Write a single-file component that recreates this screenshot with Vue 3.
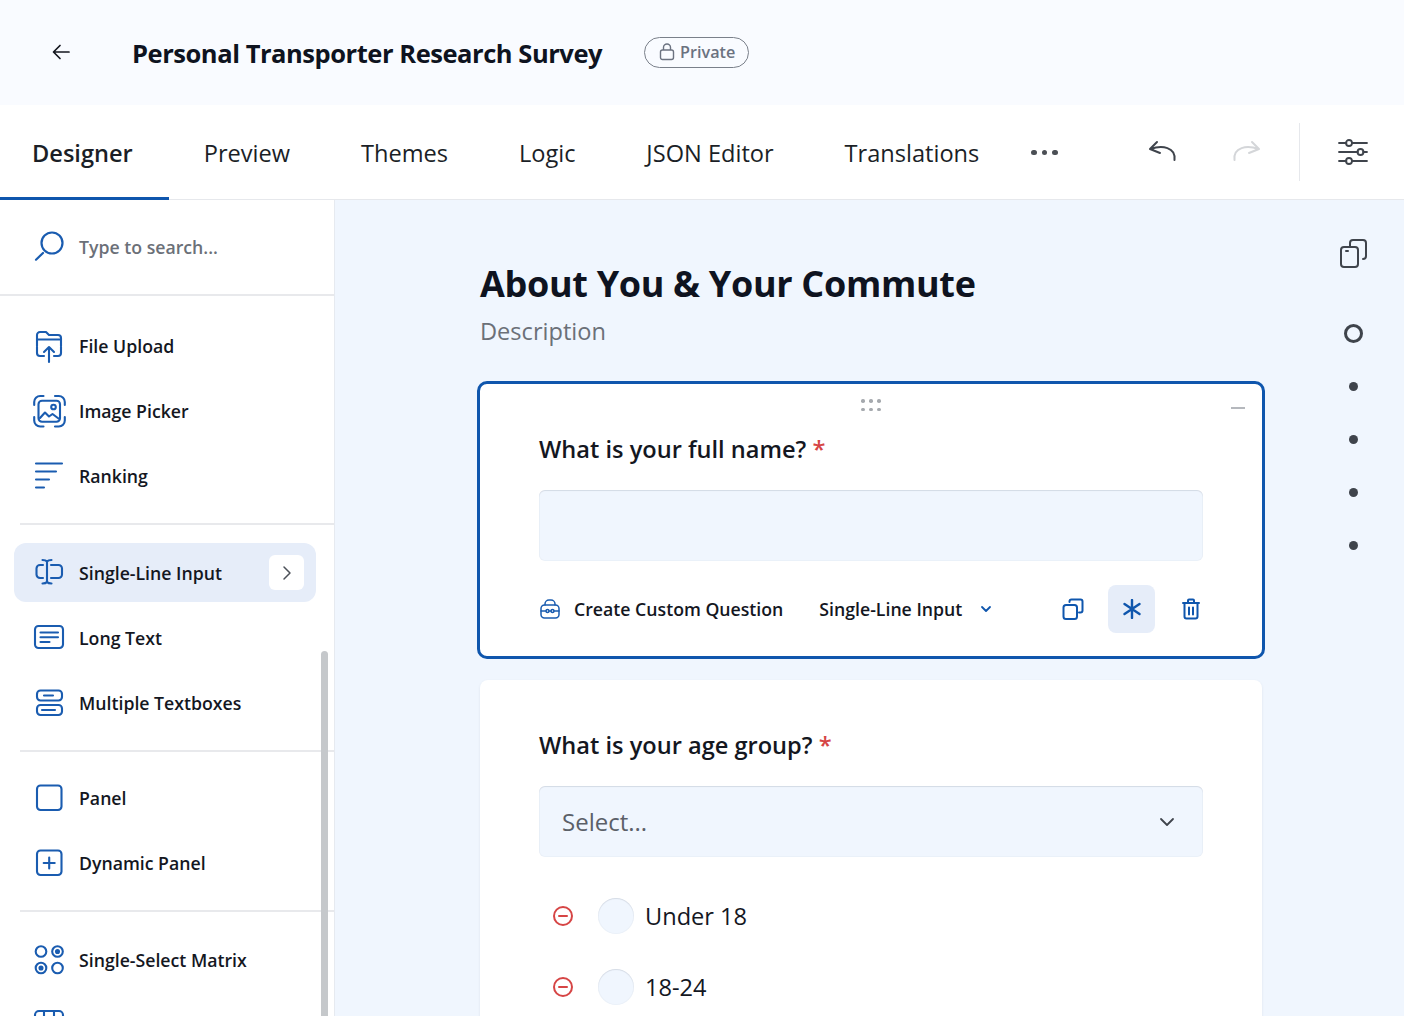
<script setup>
const tabs = ['Designer', 'Preview', 'Themes', 'Logic', 'JSON Editor', 'Translations']

const icons = {
  upload: '<path d="M4 16V5a3 3 0 0 1 3-3h6l3 3h9a3 3 0 0 1 3 3v8"/><path d="M4 9.500h24"/><path d="M4 17v6a3 3 0 0 0 3 3h4M28 17v6a3 3 0 0 1-3 3h-4"/><path d="M16 32V17M11 22l5-5 5 5"/>',
  image: '<rect x="5.500" y="5.700" width="21.500" height="21" rx="3.500"/><circle cx="20.500" cy="12" r="2.300"/><path d="M7 23l5-5.500 4 4 3.500-2.500 6 4.500"/><path d="M1.200 10V7a6 6 0 0 1 6-6h3.300M22 1h3.800a6 6 0 0 1 6 6v3M31.800 22v3.500a6 6 0 0 1-6 6H22M10.500 31.500H7.200a6 6 0 0 1-6-6V22"/>',
  ranking: '<path d="M3 3.500h26M3 11.500h20M3 19.500h13M3 27.500h8"/>',
  single: '<path d="M10 8H7a3.500 3.500 0 0 0-3.500 3.500v6A3.500 3.500 0 0 0 7 21h3M18 8h7.500a3.500 3.500 0 0 1 3.500 3.500v6a3.500 3.500 0 0 1-3.500 3.500H18"/><path d="M14 4v21M9.500 3c2 0 3.500.3 4.500 1.500C15 3.300 16.500 3 18.500 3M9.500 26.500c2 0 3.500-.3 4.500-1.500 1 1.200 2.500 1.500 4.500 1.500"/>',
  long: '<rect x="2" y="4" width="28" height="22" rx="3.500"/><path d="M7.500 10.500h17.500M7.500 15.300h17.500M7.500 20h9"/>',
  multi: '<rect x="4" y="3.500" width="25" height="10" rx="3.500"/><rect x="4" y="18" width="25" height="10" rx="3.500"/><path d="M11 8.500h9M9 23h13"/>',
  panel: '<rect x="4" y="3.500" width="24.500" height="24.500" rx="3.500"/>',
  dynamic: '<rect x="4" y="3.500" width="24.500" height="24.500" rx="3.500"/><path d="M16.200 10.500v11M10.700 16h11"/>',
  matrix: '<circle cx="8" cy="7.500" r="5.300"/><circle cx="24.500" cy="7.500" r="5.300"/><circle cx="8" cy="24" r="5.300"/><circle cx="24.500" cy="24" r="5.300"/><circle cx="24.500" cy="7.500" r="1.500" fill="#1a5cb0"/><circle cx="8" cy="24" r="1.500" fill="#1a5cb0"/>',
  table: '<rect x="2" y="2" width="28" height="24" rx="4"/><path d="M2 10h28M11 2v24M21 2v24"/>'
}

const groups = [
  [
    { name: 'File Upload', icon: 'upload' },
    { name: 'Image Picker', icon: 'image' },
    { name: 'Ranking', icon: 'ranking' }
  ],
  [
    { name: 'Single-Line Input', icon: 'single', active: true },
    { name: 'Long Text', icon: 'long' },
    { name: 'Multiple Textboxes', icon: 'multi' }
  ],
  [
    { name: 'Panel', icon: 'panel' },
    { name: 'Dynamic Panel', icon: 'dynamic' }
  ],
  [
    { name: 'Single-Select Matrix', icon: 'matrix' },
    { name: '', icon: 'table' }
  ]
]

const choices = ['Under 18', '18-24']
const dots = [1, 2, 3, 4]
</script>

<template>
  <div class="page">
    <header class="top">
      <svg class="back" width="18" height="16" viewBox="0 0 18 16" fill="none" stroke="#14171f" stroke-width="1.700" stroke-linecap="round" stroke-linejoin="round">
        <path d="M17 8H2M8 1.500L1.500 8 8 14.500" />
      </svg>
      <h1 class="title">Personal Transporter Research Survey</h1>
      <span class="pill">
        <svg width="16" height="18" viewBox="0 0 16 18" fill="none" stroke="#6b7280" stroke-width="1.400">
          <rect x="1.500" y="7" width="13" height="9.500" rx="2" />
          <path d="M4.500 7V4.500a3.500 3.500 0 0 1 7 0V7" />
        </svg>
        Private
      </span>
    </header>

    <nav class="tabs">
      <a v-for="(t, i) in tabs" :key="t" class="tab" :class="{ on: i === 0 }">{{ t }}</a>
      <span class="more"><i></i><i></i><i></i></span>
      <div class="tools">
        <svg class="undo" width="30" height="24" viewBox="0 0 30 24" fill="none" stroke="#3f444c" stroke-width="2" stroke-linecap="round" stroke-linejoin="round">
          <path d="M9 2L2 9l10 4M2.500 9C14 5 28 7 26.500 20" />
        </svg>
        <svg class="redo" width="30" height="24" viewBox="0 0 30 24" fill="none" stroke="#d4d6d9" stroke-width="2" stroke-linecap="round" stroke-linejoin="round">
          <path d="M20 2l7 7-10 4M26.500 9C15 5 1 7 2.500 20" />
        </svg>
        <span class="vline"></span>
        <svg class="sliders" width="30" height="26" viewBox="0 0 30 26" fill="none" stroke="#3f444c" stroke-width="1.800" stroke-linecap="round">
          <path d="M1 4h7.500M14 4h15M1 13h19M25 13h4M1 22h7.500M14 22h15" />
          <circle cx="11" cy="4" r="3" />
          <circle cx="22.500" cy="13" r="3" />
          <circle cx="11" cy="22" r="3" />
        </svg>
      </div>
    </nav>

    <div class="body">
      <aside class="side">
        <div class="search">
          <svg width="32" height="32" viewBox="0 0 32 32" fill="none" stroke="#1a5cb0" stroke-width="2.200" stroke-linecap="round">
            <circle cx="19" cy="12" r="10.500" />
            <path d="M10 22l-7 6.700" />
          </svg>
          <span>Type to search...</span>
        </div>
        <div class="list">
          <section v-for="(g, gi) in groups" :key="gi" class="group">
            <div v-for="item in g" :key="item.icon" class="item" :class="{ active: item.active }">
              <svg class="ico" width="32" height="32" viewBox="0 0 32 32" fill="none" stroke="#1a5cb0" stroke-width="2.100" stroke-linecap="round" stroke-linejoin="round" v-html="icons[item.icon]"></svg>
              <span>{{ item.name }}</span>
              <b v-if="item.active" class="go">
                <svg width="10" height="16" viewBox="0 0 10 16" fill="none" stroke="#4b5058" stroke-width="1.500" stroke-linecap="round" stroke-linejoin="round">
                  <path d="M2 2l6 6-6 6" />
                </svg>
              </b>
            </div>
          </section>
          <div class="thumb"></div>
        </div>
      </aside>

      <main class="main">
        <div class="column">
          <h2 class="page-title">About You &amp; Your Commute</h2>
          <p class="desc">Description</p>

          <section class="card selected">
            <div class="grip"><i v-for="n in 6" :key="n"></i></div>
            <span class="collapse"></span>
            <h3 class="q">What is your full name? <em>*</em></h3>
            <div class="field"></div>
            <div class="actions">
              <svg width="22" height="20" viewBox="0 0 22 20" fill="none" stroke="#1a5cb0" stroke-width="1.500" stroke-linecap="round" stroke-linejoin="round">
                <path d="M6 6V5a4 4 0 0 1 4-4h2a4 4 0 0 1 4 4v1" />
                <rect x="2" y="6" width="18" height="13" rx="3.500" />
                <path d="M2 12h5M15 12h5M10 12h2" />
                <circle cx="8.500" cy="12" r="1.500" />
                <circle cx="13.500" cy="12" r="1.500" />
              </svg>
              <span class="act-a">Create Custom Question</span>
              <span class="act-b">Single-Line Input</span>
              <svg class="caret" width="12" height="8" viewBox="0 0 12 8" fill="none" stroke="#0f56ad" stroke-width="1.800" stroke-linecap="round" stroke-linejoin="round">
                <path d="M2 2l4 4 4-4" />
              </svg>
              <span class="spacer"></span>
              <svg class="copy" width="22" height="22" viewBox="0 0 22 22" fill="none" stroke="#0f56ad" stroke-width="2" stroke-linejoin="round" stroke-linecap="round">
                <rect x="1.500" y="7" width="13.500" height="14" rx="2.500" />
                <path d="M7.500 4V3.500a2 2 0 0 1 2-2h9a2 2 0 0 1 2 2v9a2 2 0 0 1-2 2H17" />
              </svg>
              <span class="req">
                <svg width="20" height="20" viewBox="0 0 20 20" fill="none" stroke="#0f56ad" stroke-width="2.400" stroke-linecap="round">
                  <path d="M10 1v18M2.500 5l15 10M17.500 5l-15 10" />
                </svg>
              </span>
              <svg class="trash" width="18" height="22" viewBox="0 0 18 22" fill="none" stroke="#0f56ad" stroke-width="2" stroke-linejoin="round" stroke-linecap="round">
                <path d="M1 5h16M6 5V2.500a1 1 0 0 1 1-1h4a1 1 0 0 1 1 1V5" />
                <path d="M2.500 5v13.500a2 2 0 0 0 2 2h9a2 2 0 0 0 2-2V5M7 9.500v7M11 9.500v7" />
              </svg>
            </div>
          </section>

          <section class="card plain">
            <h3 class="q">What is your age group? <em>*</em></h3>
            <div class="field select">
              <span>Select...</span>
              <svg width="16" height="10" viewBox="0 0 16 10" fill="none" stroke="#3f444c" stroke-width="1.800" stroke-linecap="round" stroke-linejoin="round">
                <path d="M2 2l6 6 6-6" />
              </svg>
            </div>
            <div v-for="c in choices" :key="c" class="choice">
              <svg width="22" height="22" viewBox="0 0 22 22" fill="none" stroke="#d64545" stroke-width="2" stroke-linecap="round">
                <circle cx="11" cy="11" r="9" />
                <path d="M7 11h8" />
              </svg>
              <span class="radio"></span>
              <span>{{ c }}</span>
            </div>
          </section>
        </div>

        <div class="rail">
          <svg width="28" height="32" viewBox="0 0 28 32" fill="none" stroke="#3f444c" stroke-width="2" stroke-linecap="round" stroke-linejoin="round">
            <rect x="2" y="10" width="17" height="20" rx="3" />
            <path d="M7 14h2M11 9V6a3 3 0 0 1 3-3h10a3 3 0 0 1 3 3v13a3 3 0 0 1-3 3" />
          </svg>
          <span class="ring"></span>
          <span v-for="d in dots" :key="d" class="dot"></span>
        </div>
      </main>
    </div>
  </div>
</template>

<style>
html, body { margin: 0; background: #fff; }
</style>

<style scoped>
* { box-sizing: border-box; }
.page {
  width: 1404px;
  height: 1016px;
  overflow: hidden;
  display: flex;
  flex-direction: column;
  font-family: "Open Sans", "Noto Sans", sans-serif;
  color: #14171f;
  background: #fff;
}
.top {
  height: 105px;
  flex: none;
  background: #f9fbff;
  display: flex;
  align-items: center;
  padding: 0 0 2px 52px;
}
.back { margin-right: 62px; }
.title {
  margin: 2px 42px 0 0;
  font-size: 25.500px;
  font-weight: 700;
  color: #0e1320;
  letter-spacing: -0.45px;
  white-space: nowrap;
}
.pill {
  width: 105px;
  height: 31px;
  margin-top: 1px;
  border: 1px solid #7a808a;
  border-radius: 16px;
  display: flex;
  align-items: center;
  gap: 5px;
  padding-left: 14px;
  font-size: 16.200px;
  font-weight: 600;
  color: #6b7280;
}
.tabs {
  height: 95px;
  flex: none;
  display: flex;
  align-items: center;
  padding-left: 32px;
  border-bottom: 1px solid #e6e8ec;
  position: relative;
}
.tab {
  font-size: 23.600px;
  margin-top: 2px;
  margin-right: 70.900px;
  color: #1b1f27;
  white-space: nowrap;
}
.tab.on {
  font-weight: 600;
  position: relative;
}
.tab.on::after {
  content: "";
  position: absolute;
  left: -32px;
  right: -36px;
  bottom: -31px;
  height: 3px;
  background: #0f56ad;
}
.more {
  display: flex;
  gap: 5px;
  margin-left: -19px;
  margin-top: 1px;
}
.more i {
  width: 5.500px;
  height: 5.500px;
  border-radius: 50%;
  background: #4b4f55;
}
.tools {
  margin-left: auto;
  display: flex;
  align-items: center;
  padding-right: 36px;
}
.undo { margin-right: 54px; }
.redo { margin-right: 37px; }
.vline {
  width: 1px;
  height: 58px;
  background: #e6e8ec;
  margin-right: 38px;
}
.body {
  flex: 1;
  min-height: 0;
  display: flex;
}
.side {
  width: 335px;
  flex: none;
  border-right: 1px solid #e6eaf0;
  display: flex;
  flex-direction: column;
  background: #fff;
}
.search {
  height: 96px;
  flex: none;
  border-bottom: 2px solid #e8e9ec;
  display: flex;
  align-items: center;
  gap: 14px;
  padding: 0 0 0 33px;
  font-size: 17.700px;
  font-weight: 600;
  color: #6b7078;
}
.list {
  position: relative;
  flex: 1;
  min-height: 0;
  overflow: hidden;
}
.group {
  margin-left: 20px;
  padding: 18px 0 18px;
  border-bottom: 2px solid #e8e9ec;
}
.group:first-child { padding-top: 20px; }
.group:nth-child(3) { padding-top: 16px; }
.group:last-of-type { border-bottom: 0; }
.item {
  height: 59px;
  margin: 0 18px 6px -6px;
  padding-left: 19px;
  border-radius: 12px;
  display: flex;
  align-items: center;
  gap: 14px;
  font-size: 17.700px;
  font-weight: 600;
  color: #14171f;
  position: relative;
}
.item:last-child { margin-bottom: 0; }
.item.active { background: #e6edf9; }
.ico { overflow: visible; }
.go {
  position: absolute;
  right: 12px;
  top: 12px;
  width: 35px;
  height: 35px;
  background: #fff;
  border-radius: 6px;
  display: flex;
  align-items: center;
  justify-content: center;
}
.thumb {
  position: absolute;
  left: 321px;
  top: 355px;
  width: 7px;
  height: 400px;
  border-radius: 4px;
  background: #c5c8cb;
}
.main {
  flex: 1;
  min-width: 0;
  background: #f0f6fe;
  display: flex;
  padding-left: 145px;
}
.column {
  width: 782px;
  flex: none;
}
.page-title {
  margin: 59px 0 0;
  font-size: 36px;
  line-height: 50px;
  font-weight: 700;
  color: #0e1320;
  letter-spacing: -0.32px;
  white-space: nowrap;
}
.desc {
  margin: 4px 0 32px;
  font-size: 23.600px;
  line-height: 36px;
  color: #6b7078;
}
.card {
  background: #fff;
  border-radius: 8px;
}
.selected {
  margin: 0 -3px 21px -3px;
  height: 278px;
  border: 3px solid #0f56ad;
  border-radius: 10px;
  padding: 47px 59px 0;
  position: relative;
}
.plain {
  padding: 47px 59px 0;
  height: 600px;
  box-shadow: 0 1px 3px rgba(20, 30, 60, 0.08);
}
.grip {
  position: absolute;
  left: 381px;
  top: 15px;
  display: grid;
  grid-template-columns: repeat(3, 3px);
  gap: 5px;
}
.grip i {
  width: 3.500px;
  height: 3.500px;
  border-radius: 50%;
  background: #a5a9ae;
}
.collapse {
  position: absolute;
  right: 17px;
  top: 23px;
  width: 14px;
  height: 2px;
  background: #b5b8bd;
}
.q {
  margin: 0;
  font-size: 23.600px;
  line-height: 36px;
  font-weight: 600;
  color: #14171f;
}
.q em {
  font-style: normal;
  font-weight: 600;
  color: #d64545;
}
.field {
  margin-top: 23px;
  height: 71px;
  width: 664px;
  background: #f0f6fe;
  border-radius: 6px;
  box-shadow: inset 0 1px 1px rgba(20, 30, 60, 0.1), inset 0 0 0 1px rgba(20, 30, 60, 0.025);
}
.select {
  display: flex;
  align-items: center;
  justify-content: space-between;
  padding: 0 28px 0 23px;
  font-size: 24px;
  color: #5b6068;
  margin-bottom: 23px;
}
.actions {
  margin-top: 24px;
  display: flex;
  align-items: center;
  font-size: 17.700px;
  font-weight: 600;
  height: 48px;
  color: #14171f;
  width: 664px;
}
.act-a { margin-left: 13px; }
.act-b { margin-left: 36px; }
.caret { margin-left: 18px; }
.spacer { flex: 1; }
.req {
  margin: 0 27px 0 24px;
  width: 47px;
  height: 48px;
  border-radius: 8px;
  background: #e6edf9;
  display: flex;
  align-items: center;
  justify-content: center;
}
.trash { margin-right: 3px; }
.choice {
  height: 71px;
  display: flex;
  align-items: center;
  padding-left: 13px;
  font-size: 23.600px;
  color: #14171f;
}
.radio {
  width: 36px;
  height: 36px;
  margin: 0 11px 0 24px;
  border-radius: 50%;
  background: #f0f6fe;
  box-shadow: inset 0 1px 1px rgba(20, 30, 60, 0.1), inset 0 0 0 1px rgba(20, 30, 60, 0.025);
}
.rail {
  margin-left: 77px;
  width: 28px;
  padding-top: 37px;
  display: flex;
  flex-direction: column;
  align-items: center;
}
.ring {
  width: 19px;
  height: 19px;
  border: 3.500px solid #3f444c;
  border-radius: 50%;
  margin-top: 55px;
  margin-bottom: 39px;
}
.dot {
  width: 9px;
  height: 9px;
  border-radius: 50%;
  background: #3f444c;
  margin-bottom: 44px;
}
</style>
